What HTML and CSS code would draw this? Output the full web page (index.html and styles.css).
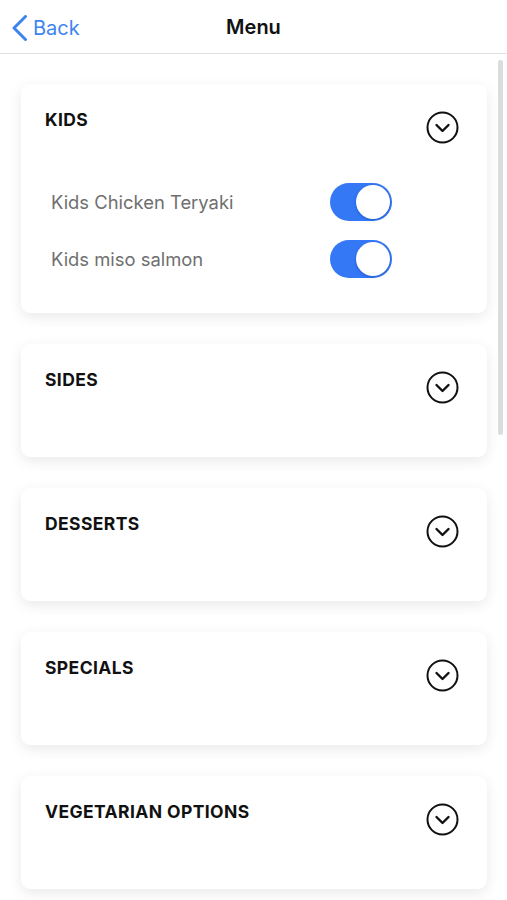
FILE: index.html
```html
<!DOCTYPE html>
<html lang="en">

<head>
    <meta charset="UTF-8">
    <meta name="viewport" content="width=device-width, initial-scale=1.0">
    <title>Menu</title>
    <link rel="stylesheet" href="styles.css">
</head>

<body>
    <header class="nav-bar">
        <a class="back-link" href="#">
            <svg class="back-icon" width="16" height="26" viewBox="0 0 16 26">
                <path d="M13.5 1.5 L2 13 L13.5 24.5" fill="none" stroke="currentColor" stroke-width="3" stroke-linecap="round" stroke-linejoin="round"/>
            </svg>
            <span>Back</span>
        </a>
        <h1 class="nav-title">Menu</h1>
    </header>

    <main class="menu-list">
        <div class="scrollbar"></div>

        <section class="category">
            <div class="category-head">
                <h2>KIDS</h2>
                <svg class="chevron" width="33" height="33" viewBox="0 0 33 33">
                    <circle cx="16.5" cy="16.5" r="15" fill="none" stroke="#111" stroke-width="2"/>
                    <path d="M10.5 14 L16.5 20 L22.5 14" fill="none" stroke="#111" stroke-width="2.4" stroke-linecap="round" stroke-linejoin="round"/>
                </svg>
            </div>
            <div class="category-body">
                <ul class="items">
                    <li class="item">
                        <span>Kids Chicken Teryaki</span>
                        <label class="switch">
                            <input type="checkbox" checked>
                            <span class="slider"></span>
                        </label>
                    </li>
                    <li class="item">
                        <span>Kids miso salmon</span>
                        <label class="switch">
                            <input type="checkbox" checked>
                            <span class="slider"></span>
                        </label>
                    </li>
                </ul>
            </div>
        </section>

        <section class="category">
            <div class="category-head">
                <h2>SIDES</h2>
                <svg class="chevron" width="33" height="33" viewBox="0 0 33 33">
                    <circle cx="16.5" cy="16.5" r="15" fill="none" stroke="#111" stroke-width="2"/>
                    <path d="M10.5 14 L16.5 20 L22.5 14" fill="none" stroke="#111" stroke-width="2.4" stroke-linecap="round" stroke-linejoin="round"/>
                </svg>
            </div>
            <div class="category-body"></div>
        </section>

        <section class="category">
            <div class="category-head">
                <h2>DESSERTS</h2>
                <svg class="chevron" width="33" height="33" viewBox="0 0 33 33">
                    <circle cx="16.5" cy="16.5" r="15" fill="none" stroke="#111" stroke-width="2"/>
                    <path d="M10.5 14 L16.5 20 L22.5 14" fill="none" stroke="#111" stroke-width="2.4" stroke-linecap="round" stroke-linejoin="round"/>
                </svg>
            </div>
            <div class="category-body"></div>
        </section>

        <section class="category">
            <div class="category-head">
                <h2>SPECIALS</h2>
                <svg class="chevron" width="33" height="33" viewBox="0 0 33 33">
                    <circle cx="16.5" cy="16.5" r="15" fill="none" stroke="#111" stroke-width="2"/>
                    <path d="M10.5 14 L16.5 20 L22.5 14" fill="none" stroke="#111" stroke-width="2.4" stroke-linecap="round" stroke-linejoin="round"/>
                </svg>
            </div>
            <div class="category-body"></div>
        </section>

        <section class="category">
            <div class="category-head">
                <h2>VEGETARIAN OPTIONS</h2>
                <svg class="chevron" width="33" height="33" viewBox="0 0 33 33">
                    <circle cx="16.5" cy="16.5" r="15" fill="none" stroke="#111" stroke-width="2"/>
                    <path d="M10.5 14 L16.5 20 L22.5 14" fill="none" stroke="#111" stroke-width="2.4" stroke-linecap="round" stroke-linejoin="round"/>
                </svg>
            </div>
            <div class="category-body"></div>
        </section>
    </main>
</body>

</html>
```

FILE: styles.css
```css
body {
    font-family: Inter, "Liberation Sans", sans-serif;
    background-color: #ffffff;
    margin: 0;
    overflow: hidden;
}

.nav-bar {
    position: relative;
    display: flex;
    align-items: center;
    justify-content: center;
    height: 54px;
    border-bottom: 1px solid #e2e2e2;
    box-sizing: border-box;
}

.back-link {
    position: absolute;
    left: 12px;
    top: 15px;
    display: flex;
    align-items: center;
    gap: 5px;
    color: #3e84f1;
    text-decoration: none;
    font-size: 20px;
}

.back-icon {
    display: block;
}

.nav-title {
    margin: 0;
    padding-top: 1px;
    font-size: 20px;
    font-weight: 600;
    color: #111111;
}

.menu-list {
    position: relative;
    display: flex;
    flex-direction: column;
    gap: 31px;
    padding: 30px 20px 20px 21px;
}

.scrollbar {
    position: absolute;
    right: 4px;
    top: 6px;
    width: 5px;
    height: 375px;
    border-radius: 3px;
    background-color: #dcdcdc;
}

.category {
    width: 466px;
    padding: 25px 28px 35px 24px;
    box-sizing: border-box;
    background-color: #ffffff;
    border-radius: 9px;
    box-shadow: 0 4px 14px rgba(0, 0, 0, 0.09);
}

.category-head {
    display: flex;
    justify-content: space-between;
    align-items: flex-start;
}

.category-head h2 {
    margin: 0;
    font-size: 17.5px;
    line-height: 22px;
    font-weight: 700;
    letter-spacing: 0.4px;
    color: #111111;
}

.chevron {
    display: block;
    margin-top: 2px;
}

.category-body {
    padding-top: 18px;
}

.items {
    list-style: none;
    margin: 0;
    padding: 20px 0 0 6px;
    display: flex;
    flex-direction: column;
    gap: 18px;
}

.item {
    display: flex;
    align-items: center;
    height: 39px;
    font-size: 18.4px;
    color: #6f6f6f;
}

.item > span {
    width: 279px;
}

.switch {
    position: relative;
    display: block;
    width: 62px;
    height: 38px;
}

.switch input {
    display: none;
}

.slider {
    position: absolute;
    inset: 0;
    border-radius: 19px;
    background-color: #3478f6;
}

.slider::after {
    content: "";
    position: absolute;
    right: 2px;
    top: 2px;
    width: 34px;
    height: 34px;
    border-radius: 50%;
    background-color: #ffffff;
    box-shadow: 0 1px 3px rgba(0, 40, 120, 0.35);
}
```
